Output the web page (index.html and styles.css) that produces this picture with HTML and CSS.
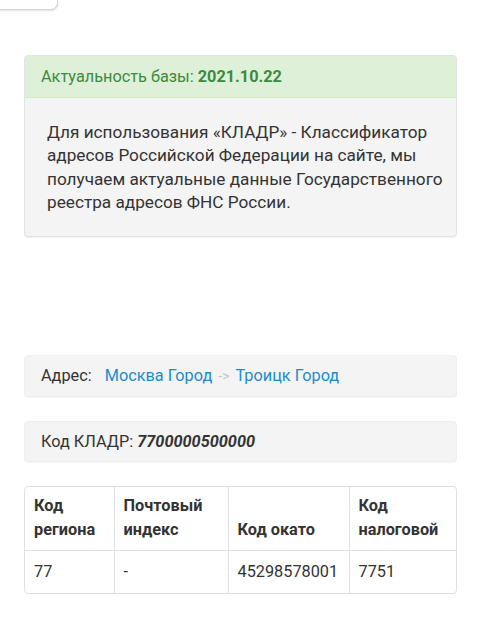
FILE: index.html
```html
<!DOCTYPE html>
<html lang="ru">
<head>
<meta charset="utf-8">
<link rel="stylesheet" href="styles.css">
</head>
<body>
<div class="topbtn"></div>
<div class="page">
  <div class="panel">
    <div class="panel-heading">Актуальность базы: <b>2021.10.22</b></div>
    <div class="panel-body">Для использования «КЛАДР» - Классификатор адресов Российской Федерации на сайте, мы получаем актуальные данные Государственного реестра адресов ФНС России.</div>
  </div>
  <div class="well address">Адрес: <a class="link first">Москва Город</a><span class="arrow">-&gt;</span><a class="link">Троицк Город</a></div>
  <div class="well kladr">Код КЛАДР: <b><i>7700000500000</i></b></div>
  <div class="tablewrap">
    <table class="codes">
      <colgroup><col class="c1"><col class="c2"><col class="c3"><col class="c4"></colgroup>
      <thead>
        <tr><th>Код<br>региона</th><th>Почтовый<br>индекс</th><th>Код окато</th><th>Код<br>налоговой</th></tr>
      </thead>
      <tbody>
        <tr><td>77</td><td>-</td><td>45298578001</td><td>7751</td></tr>
      </tbody>
    </table>
  </div>
</div>
</body>
</html>
```
FILE: styles.css
```css
html, body {
  margin: 0;
  background: #fff;
}
body {
  font-family: Roboto, "Liberation Sans", sans-serif;
  font-size: 16.3px;
  color: #333;
}
.topbtn {
  width: 66px;
  height: 9px;
  margin-left: -10px;
  border: 1px solid #d4d4d4;
  border-top: none;
  border-radius: 0 0 7px 7px;
  box-shadow: 0 1px 2px rgba(0,0,0,0.12);
  background: #fff;
}
.page {
  padding: 0 23px 40px 24px;
}
.panel {
  margin-top: 45px;
  border: 1px solid #e3e3e3;
  border-radius: 4px;
  background: #f4f4f4;
  box-shadow: 0 1px 1px rgba(0,0,0,0.05);
  overflow: hidden;
}
.panel-heading {
  background: #dff0d8;
  color: #3c8a3e;
  padding: 10px 16px 9px;
  line-height: 22px;
  border-bottom: 1px solid #d6e9c6;
}
.panel-body {
  padding: 23px 10px 22px 22px;
  font-size: 17.2px;
  line-height: 23.3px;
}
.well {
  background: #f4f4f4;
  border: 1px solid #efefef;
  border-radius: 4px;
  padding: 9px 16px;
  line-height: 21px;
  box-shadow: 0 1px 1px rgba(0,0,0,0.04);
}
.address {
  margin-top: 118px;
}
.kladr {
  margin-top: 24px;
}
.link {
  color: #1b8ccb;
  text-decoration: none;
}
.link.first {
  margin-left: 9px;
}
.arrow {
  color: #c4c4c4;
  font-size: 14px;
  margin: 0 6px;
}
.tablewrap {
  margin-top: 24px;
  border: 1px solid #e0e0e0;
  border-radius: 4px;
  overflow: hidden;
}
.codes {
  width: 100%;
  border-collapse: collapse;
  table-layout: fixed;
}
.c1 { width: 89px; }
.c2 { width: 114px; }
.c3 { width: 121px; }
.c4 { width: auto; }
.codes th, .codes td {
  text-align: left;
  padding: 8px 9px;
  line-height: 24px;
  border-left: 1px solid #e0e0e0;
}
.codes th:first-child, .codes td:first-child {
  border-left: none;
}
.codes th {
  font-weight: bold;
  vertical-align: bottom;
  border-bottom: 1px solid #e0e0e0;
  padding-top: 7px;
  padding-bottom: 8px;
}
.codes td {
  padding-top: 9px;
  padding-bottom: 9px;
}
```
